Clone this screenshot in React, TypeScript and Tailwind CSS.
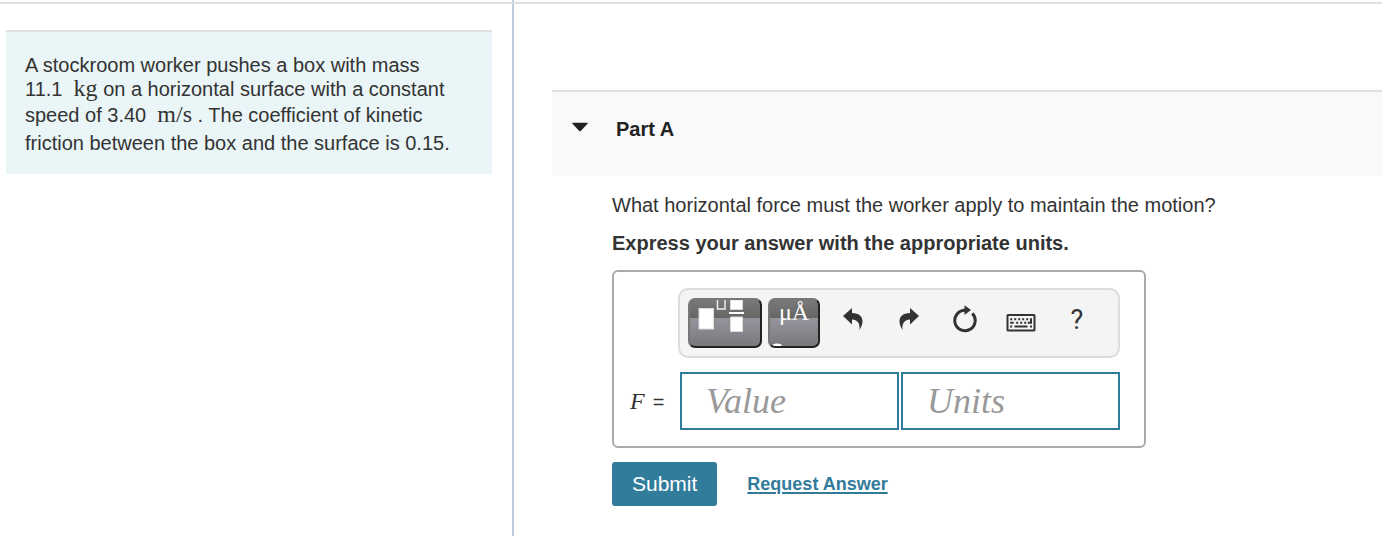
import type { ReactNode } from "react";

function ToolIcon({ label, children }: { label: string; children: ReactNode }) {
  return (
    <button
      type="button"
      aria-label={label}
      className="flex h-11 w-14 items-center justify-center text-[#333]"
    >
      {children}
    </button>
  );
}

function Problem() {
  return (
    <aside className="w-[512px] shrink-0 pt-[26px] pr-5 pl-1.5">
      <div className="border-t-2 border-[#dfdfdf] bg-[#eaf5f7] px-[19px] pt-[21px] pb-[19px]">
        <p className="leading-6">
          A stockroom worker pushes a box with mass{" "}
          <span className="whitespace-nowrap">
            11.1 &nbsp;
            <span className="font-['Liberation_Serif',serif] text-[24px] leading-5">kg</span>
          </span>{" "}
          on a horizontal surface with a constant speed of 3.40 &nbsp;
          <span className="inline-block pb-1 font-['Liberation_Serif',serif] text-[24px] leading-[26px]">
            m/s
          </span>{" "}
          . The coefficient of kinetic friction between the box and the surface is 0.15.
        </p>
      </div>
    </aside>
  );
}

function Toolbar() {
  return (
    <div className="flex rounded-[10px] border-2 border-[#dcdcdc] bg-[#f4f4f4] p-2">
      <button
        type="button"
        aria-label="Templates"
        className="mr-1.5 h-[50px] w-[74px] overflow-hidden rounded-[7px] border-2 border-t-[#777] border-r-[#222] border-b-[#222] border-l-[#777] bg-[linear-gradient(#7b7b7b,#666_40%,#95949c_40%,#77767c)] bg-origin-border"
      >
        <svg width="70" height="46" viewBox="0 0 70 46" fill="#fff">
          <rect x="9" y="8.500" width="14.500" height="20.500" stroke="#ddd" />
          <path d="M27.500 0v9h7.500V0" fill="none" stroke="#eee" strokeWidth="1.500" />
          <path d="M40.500 0h12v9.500h-12zM40.500 17h12v14.500h-12z" stroke="#ddd" />
          <path d="M39 12h15v2H39z" />
        </svg>
      </button>
      <button
        type="button"
        aria-label="Symbols"
        className="relative mr-[5px] flex h-[50px] w-[52px] justify-center overflow-hidden rounded-[7px] border-2 border-t-[#777] border-r-[#222] border-b-[#222] border-l-[#777] bg-[linear-gradient(#7b7b7b,#666_40%,#95949c_40%,#77767c)] bg-origin-border font-['Liberation_Serif',serif] text-[24px] leading-6 text-white"
      >
        μÅ
        <svg className="absolute bottom-0 left-0.5" width="10" height="3" viewBox="0 0 10 3">
          <ellipse cx="5" cy="3" rx="5" ry="2.600" fill="#fff" />
        </svg>
      </button>
      <ToolIcon label="Undo">
        <svg width="20" height="24" viewBox="0 0 20 24" fill="currentColor">
          <path d="M9 0v5c7 0 10.500 3.500 10.500 8.500 0 3-1.500 6-3.200 8.500 1-6-1-10-7.300-10.500v5L0 8z" />
        </svg>
      </ToolIcon>
      <ToolIcon label="Redo">
        <svg width="20" height="24" viewBox="0 0 20 24" fill="currentColor">
          <path d="M11 0v5C4 5 .5 8.500.5 13.500c0 3 1.500 6 3.200 8.500-1-6 1-10 7.300-10.500v5l9-8.500z" />
        </svg>
      </ToolIcon>
      <ToolIcon label="Reset">
        <svg width="24" height="30" viewBox="0 0 24 30" fill="none">
          <path d="M19.300 8.400A10.200 10.200 0 1 1 12 5.300" stroke="currentColor" strokeWidth="3" />
          <path d="M11.500 .3v9.700l6.500-5z" fill="currentColor" />
        </svg>
      </ToolIcon>
      <ToolIcon label="Keyboard shortcuts">
        <svg width="30" height="24" viewBox="0 0 30 24" fill="none">
          <rect x="1.500" y="7" width="27" height="15.500" rx=".5" stroke="currentColor" strokeWidth="2" />
          <path
            d="M4.200 10.300h2v2h-2zM8.200 10.300h2v2h-2zM12.200 10.300h2v2h-2zM16.200 10.300h2v2h-2zM20.200 10.300h2v2h-2zM24 10.300h2v5.500h-4.200v-2H24zM4.200 13.800h3.500v2H4.200zM10.200 13.800h2v2h-2zM14.200 13.800h2v2h-2zM18.200 13.800h2v2h-2zM4.200 17.500h2v2h-2zM8.500 17.500h13v2h-13zM24 17.500h2v2h-2z"
            fill="currentColor"
          />
        </svg>
      </ToolIcon>
      <ToolIcon label="Help">
        <span className="font-[Roboto,sans-serif] text-[27px] leading-6">?</span>
      </ToolIcon>
    </div>
  );
}

function AnswerBox() {
  return (
    <div className="max-w-[534px] rounded-md border-2 border-[#aaa] py-4 pr-6 pl-4">
      <div className="pl-12">
        <Toolbar />
      </div>
      <div className="mt-3.5 flex items-center">
        <label htmlFor="value" className="flex w-[50px] shrink-0 items-baseline gap-2">
          <span className="font-['Liberation_Serif',serif] text-[24px] italic">F</span>
          <span>=</span>
        </label>
        <div className="flex min-w-0 flex-1 gap-0.5">
          <input
            id="value"
            placeholder="Value"
            className="h-[58px] w-full min-w-0 border-2 border-[#317b9b] px-6 font-['Liberation_Serif',serif] text-[36px] italic outline-none placeholder:text-[#999]"
          />
          <input
            aria-label="Units"
            placeholder="Units"
            className="h-[58px] w-full min-w-0 border-2 border-[#317b9b] px-6 font-['Liberation_Serif',serif] text-[36px] italic outline-none placeholder:text-[#999]"
          />
        </div>
      </div>
    </div>
  );
}

export default function App() {
  return (
    <div className="flex min-h-screen flex-col bg-white font-['Liberation_Sans',Arial,sans-serif] text-[20px] text-[#333]">
      <div className="border-b-2 border-[#dfdfdf] pl-[512px]">
        <div className="h-0.5 w-0.5 bg-[#bccbdd]" />
      </div>
      <div className="flex flex-1">
        <Problem />
        <main className="min-w-0 flex-1 border-l-2 border-[#bccbdd] pt-[86px] pl-[38px]">
          <h2 className="border-t-2 border-[#dfdfdf] bg-[#f9f9f9] font-bold text-[#222]">
            <button
              type="button"
              aria-expanded="true"
              className="flex h-[84px] w-full items-center gap-7 pb-2.5 pl-5"
            >
              <svg width="16" height="14" viewBox="0 0 16 14" fill="currentColor">
                <path d="M1 .8h14c.8 0 1 .6.500 1L9 8.800q-1 1-2 0L.5 1.800c-.5-.4-.3-1 .5-1z" />
              </svg>
              Part A
            </button>
          </h2>
          <div className="pl-[60px]">
            <p className="mt-[17px] leading-6">
              What horizontal force must the worker apply to maintain the motion?
            </p>
            <p className="mt-3.5 mb-[15px] leading-6 font-bold">
              Express your answer with the appropriate units.
            </p>
            <AnswerBox />
            <div className="mt-3.5 flex items-center gap-[30px]">
              <button
                type="submit"
                className="h-11 rounded-[3px] bg-[#317b9b] px-5 text-[21px] text-white"
              >
                Submit
              </button>
              <a
                href="#answer"
                className="text-[18px] font-bold text-[#317b9b] underline decoration-2 underline-offset-2"
              >
                Request Answer
              </a>
            </div>
          </div>
        </main>
      </div>
    </div>
  );
}
